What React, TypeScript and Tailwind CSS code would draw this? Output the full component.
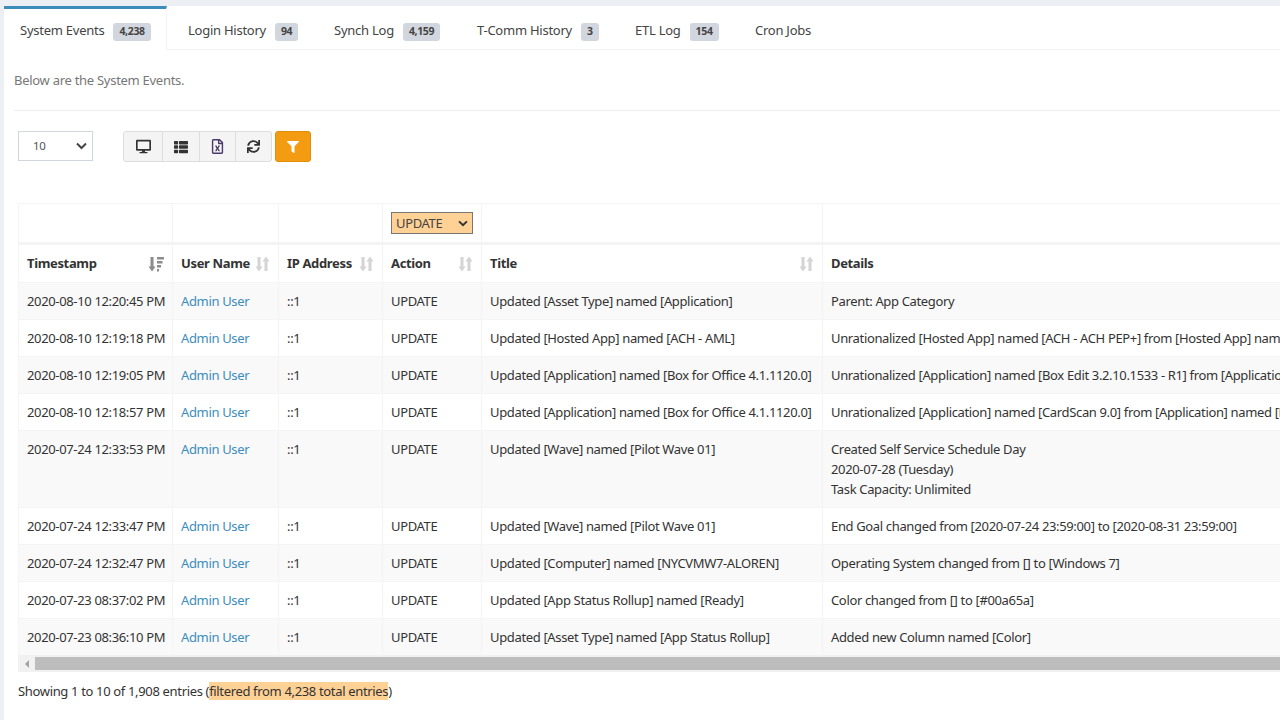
import React from 'react'
import { FaDesktop, FaThList, FaRegFileExcel, FaSync, FaFilter } from 'react-icons/fa'

const tabs = [
  { label: 'System Events', count: '4,238', cls: 'w-[163px] pl-4 pr-4' },
  { label: 'Login History', count: '94', cls: 'w-[146px] pl-[21px]' },
  { label: 'Synch Log', count: '4,159', cls: 'w-[143px] pl-[21px]' },
  { label: 'T-Comm History', count: '3', cls: 'w-[158px] pl-[21px]' },
  { label: 'ETL Log', count: '154', cls: 'w-[120px] pl-[21px]' },
  { label: 'Cron Jobs', count: '', cls: 'pl-[21px]' },
]

const rows = [
  ['2020-08-10 12:20:45 PM', 'Updated [Asset Type] named [Application]', ['Parent: App Category']],
  ['2020-08-10 12:19:18 PM', 'Updated [Hosted App] named [ACH - AML]', ['Unrationalized [Hosted App] named [ACH - ACH PEP+] from [Hosted App] named [ACH - AML]']],
  ['2020-08-10 12:19:05 PM', 'Updated [Application] named [Box for Office 4.1.1120.0]', ['Unrationalized [Application] named [Box Edit 3.2.10.1533 - R1] from [Application] named [Box for Office 4.1.1120.0]']],
  ['2020-08-10 12:18:57 PM', 'Updated [Application] named [Box for Office 4.1.1120.0]', ['Unrationalized [Application] named [CardScan 9.0] from [Application] named [Box for Office 4.1.1120.0]']],
  ['2020-07-24 12:33:53 PM', 'Updated [Wave] named [Pilot Wave 01]', ['Created Self Service Schedule Day', '2020-07-28 (Tuesday)', 'Task Capacity: Unlimited']],
  ['2020-07-24 12:33:47 PM', 'Updated [Wave] named [Pilot Wave 01]', ['End Goal changed from [2020-07-24 23:59:00] to [2020-08-31 23:59:00]']],
  ['2020-07-24 12:32:47 PM', 'Updated [Computer] named [NYCVMW7-ALOREN]', ['Operating System changed from [] to [Windows 7]']],
  ['2020-07-23 08:37:02 PM', 'Updated [App Status Rollup] named [Ready]', ['Color changed from [] to [#00a65a]']],
  ['2020-07-23 08:36:10 PM', 'Updated [Asset Type] named [App Status Rollup]', ['Added new Column named [Color]']],
] as const

const SortIcon = () => (
  <svg width="15" height="16" viewBox="0 0 15 16" className="shrink-0 text-[#d4d4d4] fill-current">
    <path d="M2.500 1h3v9.500h2L4 15.500.500 10.500h2z" />
    <path d="M9.500 15h3V5.500h2L11 .500 7.500 5.500h2z" />
  </svg>
)

const SortDescIcon = () => (
  <svg width="16" height="16" viewBox="0 0 16 16" className="shrink-0 text-[#8c8c8c] fill-current">
    <path d="M2.500 1h3v9.500h2L4 15.500.500 10.500h2z" />
    <path d="M9 1h7v2.500H9zM9 5h5.500v2.500H9zM9 9h4v2.500H9zM9 13h2v2.500H9z" />
  </svg>
)

const th = 'border-l border-[#f4f4f4] first:border-l-0 px-2 text-left font-bold text-[#333]'
const td = 'border-l border-t border-[#f4f4f4] first:border-l-0 px-2 align-top py-[8px] leading-5'

export default function App() {
  return (
    <div className="h-[720px] w-[1280px] overflow-hidden bg-[#ecf0f5] pt-[6px] pl-[4px] text-[13px] tracking-[-0.35px] text-[#333] font-['Noto_Sans','Liberation_Sans',sans-serif]">
      <div className="h-full bg-white">
        {/* tabs */}
        <div className="flex h-[44px] border-b border-[#f4f4f4] tracking-[-0.25px]">
          {tabs.map((t, i) => (
            <div
              key={t.label}
              className={`${t.cls} flex items-center gap-[9px] whitespace-nowrap text-[#444] ${i === 0 ? 'h-[44px] border-t-[3px] border-[#3c8dbc] border-r border-r-[#f4f4f4] bg-white pt-[3px]' : 'pt-[7px]'}`}
            >
              <span>{t.label}</span>
              {t.count && (
                <span className="mt-[2px] flex h-[18px] items-center rounded-[3px] bg-[#d2d6de] px-[6px] text-[10.500px] font-bold tracking-[-0.35px] text-[#444]">{t.count}</span>
              )}
            </div>
          ))}
        </div>

        <div className="pl-[10px] pt-[20px] leading-5 tracking-[-0.28px] text-[#777]">Below are the System Events.</div>
        <div className="ml-[10px] mt-[20px] border-b border-[#eee]" />

        {/* toolbar */}
        <div className="mt-[20px] flex items-start pl-[14px]">
          <div className="flex h-[30px] w-[75px] items-center justify-between border border-[#d2d6de] bg-white pl-[14px] pr-[5px] text-[11.500px] text-[#555]">
            <span>10</span>
            <svg width="11" height="8" viewBox="0 0 11 8" fill="none" stroke="#444" strokeWidth="2"><path d="M1 1.500l4.500 4.500L10 1.500" /></svg>
          </div>
          <div className="ml-[30px] flex h-[31px] rounded-[3px] border border-[#ddd] bg-[#f4f4f4] text-[#333]">
            <div className="flex w-[39px] items-center justify-center border-r border-[#ddd]"><FaDesktop size={15} /></div>
            <div className="flex w-[37px] items-center justify-center border-r border-[#ddd]"><FaThList size={14} /></div>
            <div className="flex w-[36px] items-center justify-center border-r border-[#ddd]"><FaRegFileExcel size={15} className="text-[#4a3a6a]" /></div>
            <div className="flex w-[35px] items-center justify-center"><FaSync size={13} /></div>
          </div>
          <div className="ml-[3px] flex h-[31px] w-[36px] items-center justify-center rounded-[3px] border border-[#e08e0b] bg-[#f39c12] text-white">
            <FaFilter size={12} />
          </div>
        </div>

        {/* table */}
        <div className="mt-[41px] ml-[14px] overflow-hidden">
          <table className="w-[1700px] table-fixed border-collapse border-t border-l border-[#f4f4f4]">
            <colgroup>
              <col className="w-[154px]" />
              <col className="w-[106px]" />
              <col className="w-[104px]" />
              <col className="w-[99px]" />
              <col className="w-[341px]" />
              <col />
            </colgroup>
            <thead>
              <tr className="h-[40px] border-b-[3px] border-[#f4f4f4]">
                <td className="border-l border-[#f4f4f4] first:border-l-0" />
                <td className="border-l border-[#f4f4f4]" />
                <td className="border-l border-[#f4f4f4]" />
                <td className="border-l border-[#f4f4f4] px-2">
                  <div className="flex h-[22px] w-[82px] items-center justify-between border border-[#777] bg-[#ffd195] pl-1 pr-[4px] pt-[1px] text-[#444]">
                    <span>UPDATE</span>
                    <svg width="10" height="7" viewBox="0 0 11 8" fill="none" stroke="#333" strokeWidth="2.200"><path d="M1 1.500l4.500 4.500L10 1.500" /></svg>
                  </div>
                </td>
                <td className="border-l border-[#f4f4f4]" />
                <td className="border-l border-[#f4f4f4]" />
              </tr>
              <tr className="h-[39px]">
                <th className={th}>
                  <div className="flex items-center justify-between">Timestamp <SortDescIcon /></div>
                </th>
                <th className={th}>
                  <div className="flex items-center justify-between whitespace-nowrap">User Name <SortIcon /></div>
                </th>
                <th className={th}>
                  <div className="flex items-center justify-between whitespace-nowrap">IP Address <SortIcon /></div>
                </th>
                <th className={th}>
                  <div className="flex items-center justify-between">Action <SortIcon /></div>
                </th>
                <th className={th}>
                  <div className="flex items-center justify-between">Title <SortIcon /></div>
                </th>
                <th className={th}>Details</th>
              </tr>
            </thead>
            <tbody>
              {rows.map((r, i) => (
                <tr key={r[0]} className={i % 2 === 0 ? 'bg-[#f9f9f9]' : 'bg-white'}>
                  <td className={`${td} whitespace-nowrap`}>{r[0]}</td>
                  <td className={`${td} text-[#3c8dbc]`}>Admin User</td>
                  <td className={td}>::1</td>
                  <td className={td}>UPDATE</td>
                  <td className={`${td} whitespace-nowrap`}>{r[1]}</td>
                  <td className={`${td} whitespace-nowrap`}>
                    {r[2].map((line) => (
                      <div key={line}>{line}</div>
                    ))}
                  </td>
                </tr>
              ))}
            </tbody>
          </table>
          {/* fake horizontal scrollbar */}
          <div className="flex h-[17px] items-center bg-[#f1f1f1]">
            <div className="flex w-[17px] justify-center">
              <div className="h-0 w-0 border-y-[4px] border-r-[4px] border-y-transparent border-r-[#a3a3a3]" />
            </div>
            <div className="h-[13px] flex-1 bg-[#bdbdbd]" />
          </div>
        </div>

        <div className="ml-[14px] mt-[9px] leading-5 tracking-[-0.34px]">
          Showing 1 to 10 of 1,908 entries (<span className="bg-[#ffd195]">filtered from 4,238 total entries</span>)
        </div>
      </div>
    </div>
  )
}
